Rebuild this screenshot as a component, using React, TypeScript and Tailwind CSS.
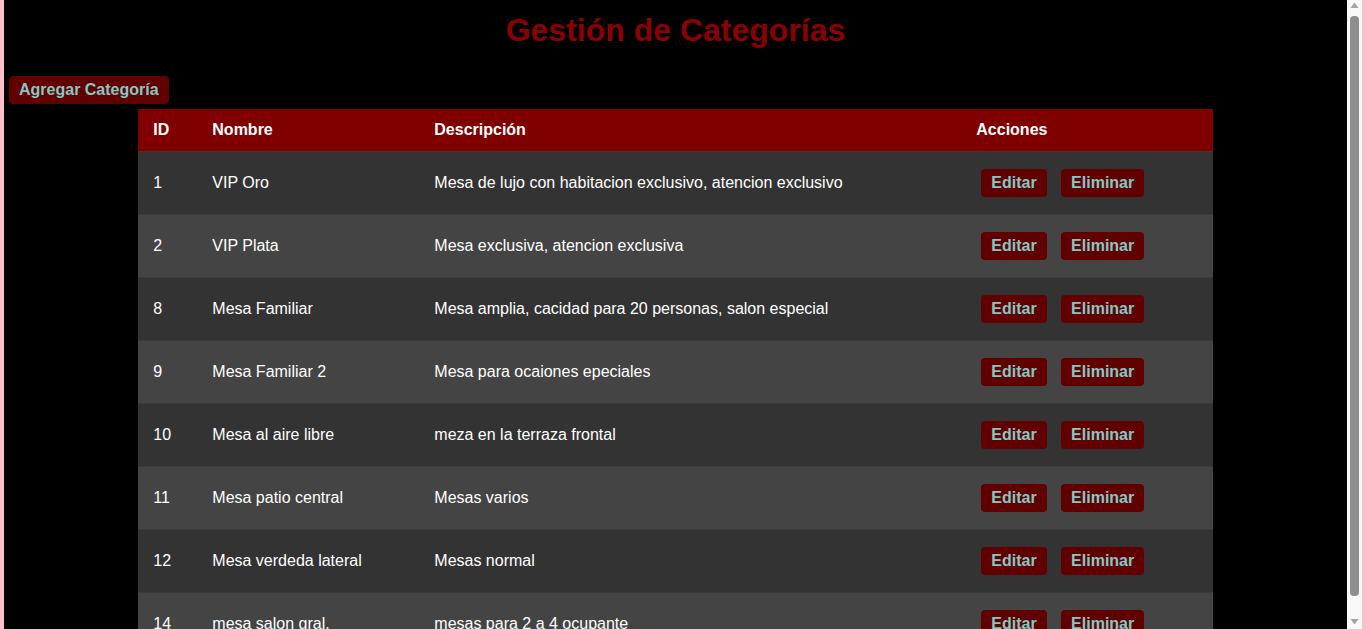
const categorias = [
  { id: 1, nombre: "VIP Oro", descripcion: "Mesa de lujo con habitacion exclusivo, atencion exclusivo" },
  { id: 2, nombre: "VIP Plata", descripcion: "Mesa exclusiva, atencion exclusiva" },
  { id: 8, nombre: "Mesa Familiar", descripcion: "Mesa amplia, cacidad para 20 personas, salon especial" },
  { id: 9, nombre: "Mesa Familiar 2", descripcion: "Mesa para ocaiones epeciales" },
  { id: 10, nombre: "Mesa al aire libre", descripcion: "meza en la terraza frontal" },
  { id: 11, nombre: "Mesa patio central", descripcion: "Mesas varios" },
  { id: 12, nombre: "Mesa verdeda lateral", descripcion: "Mesas normal" },
  { id: 14, nombre: "mesa salon gral.", descripcion: "mesas para 2 a 4 ocupante" },
];

const btn =
  "inline-block bg-[#600000] text-[#84c8c6] font-bold text-base leading-[18px] py-[5px] rounded";

function Scrollbar() {
  return (
    <div className="w-[15px] h-full bg-[#f9f9f9] flex flex-col items-center">
      <svg width="9" height="8" viewBox="0 0 9 8" className="mt-[2px] shrink-0">
        <path d="M4.5 0.5 L8.5 6 L0.5 6 Z" fill="#a3a3a3" />
      </svg>
      <div className="w-[9px] flex-1 mt-[6px] mb-[22px] bg-[#8e8e8e] rounded-t-[4px] rounded-b-[4px]" />
      <svg width="9" height="8" viewBox="0 0 9 8" className="mb-[3px] shrink-0">
        <path d="M0.5 1 L8.5 1 L4.5 6.5 Z" fill="#a3a3a3" />
      </svg>
    </div>
  );
}

export default function App() {
  return (
    <div className="h-screen bg-[#ffc0cb] px-1 flex font-['Liberation_Sans',Arial,sans-serif]">
      <div className="flex-1 h-full overflow-hidden bg-black">
        <h1 className="text-center text-[32px] leading-[37px] font-bold text-[#8b0000] pt-3 mb-[27px]">
          Gestión de Categorías
        </h1>
        <button className={`${btn} ml-[5px] px-[10px]`}>Agregar Categoría</button>
        <table className="w-4/5 mx-auto mt-[5px] border-collapse text-white">
          <thead>
            <tr className="bg-[#800000] border-b border-[#3a3a3a]">
              <th className="w-[59px] px-[15px] py-3 text-left leading-[18px]">ID</th>
              <th className="w-[222px] px-[15px] py-3 text-left leading-[18px]">Nombre</th>
              <th className="w-[542px] px-[15px] py-3 text-left leading-[18px]">Descripción</th>
              <th className="px-[15px] py-3 text-left leading-[18px]">Acciones</th>
            </tr>
          </thead>
          <tbody>
            {categorias.map((c, i) => (
              <tr
                key={c.id}
                className={`${i % 2 === 0 ? "bg-[#333333]" : "bg-[#444444]"} border-b border-[#3c3c3c]`}
              >
                <td className="px-[15px] py-3">{c.id}</td>
                <td className="px-[15px] py-3">{c.nombre}</td>
                <td className="px-[15px] py-3">{c.descripcion}</td>
                <td className="px-[15px] py-3 whitespace-nowrap">
                  <button className={`${btn} m-[5px] px-[10px]`}>Editar</button>{" "}
                  <button className={`${btn} m-[5px] px-[10px]`}>Eliminar</button>
                </td>
              </tr>
            ))}
          </tbody>
        </table>
      </div>
      <Scrollbar />
    </div>
  );
}
